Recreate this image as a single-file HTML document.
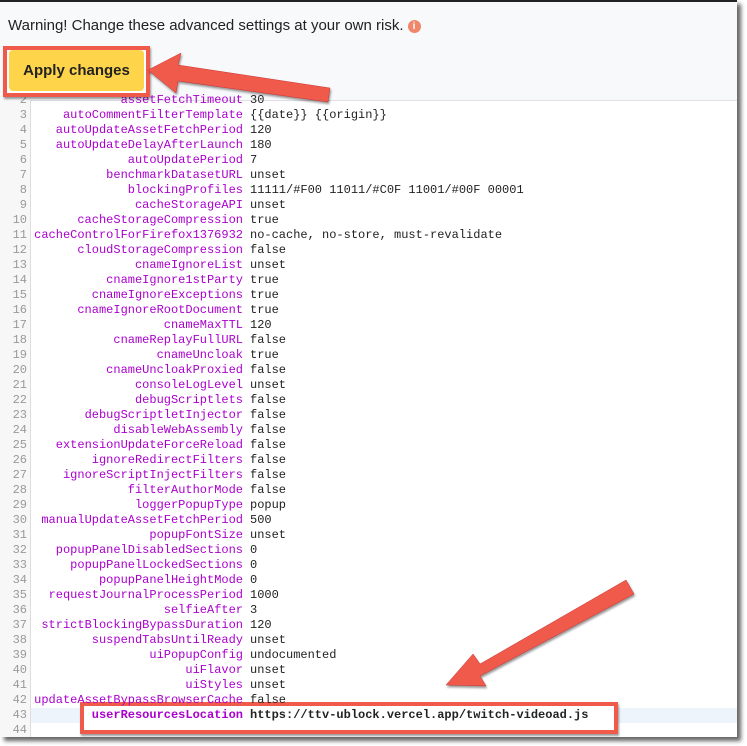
<!DOCTYPE html><html><head><style>
body{margin:0;width:747px;height:746px;background:#fff;position:relative;overflow:hidden;font-family:"Liberation Sans",sans-serif}
.frame{position:absolute;left:0;top:0;width:737px;height:735px;background:#fff;border-top:2px solid #222;box-shadow:4px 4px 4px rgba(0,0,0,.6);overflow:hidden}
.hdr{position:absolute;left:0;top:0;width:737px;height:98px;background:#f8f9fb;border-bottom:1px solid #e0e0e4}
.warn{position:absolute;left:8px;top:15px;font-size:15px;color:#222}
.info{display:inline-block;width:13px;height:13px;border-radius:50%;background:#f0866a;color:#fff;font-size:10px;font-weight:bold;text-align:center;line-height:13px;vertical-align:1px;margin-left:4px}
.btn{position:absolute;left:9px;top:48px;width:135px;height:41px;background:#fed54a;border-radius:4px;font-weight:bold;font-size:15px;color:#222;text-align:center;line-height:41px}
.rb{position:absolute;border:4px solid #ef5a4b;box-sizing:border-box;box-shadow:1px 2px 2px rgba(0,0,0,.4)}
.gut{position:absolute;left:0;top:98px;width:30px;height:640px;background:#f7f7f7;border-right:1px solid #ddd}
.ln{position:absolute;left:0;width:27px;text-align:right;font:12px "Liberation Mono",monospace;color:#999;height:15px;line-height:15px}
.k{position:absolute;right:494px;font:12px "Liberation Mono",monospace;color:#a0c;height:15px;line-height:15px;white-space:pre}
.v{position:absolute;left:250px;font:12px "Liberation Mono",monospace;color:#222;height:15px;line-height:15px;white-space:pre}
</style></head><body><div class="frame">
<div class="hdr"></div>
<div class="warn">Warning! Change these advanced settings at your own risk.<span class="info">i</span></div>
<div class="gut"></div>
<div style="position:absolute;left:31px;top:706px;width:710px;height:15px;background:#eef4fc"></div>
<div class="rb" style="left:80px;top:700px;width:538px;height:32px;background:#fff"></div>
<div id="c"></div>
<div class="rb" style="left:3px;top:44px;width:147px;height:51px;background:#fff"></div>
<div class="btn">Apply changes</div>
<svg style="position:absolute;left:0;top:0" width="747" height="746">
<g fill="#ef5a4b" stroke="#c33" stroke-width="0.5" style="filter:drop-shadow(1px 2px 1px rgba(0,0,0,.4))">
<polygon points="330,86 178,63 181,51 148,68 176,91 178,79 328,100"/>
<polygon points="626,578 480,662 473,652 446,683 486,684 480,674 634,592"/>
</g></svg>
</div>
<script>
var d=[[2,"assetFetchTimeout","30"],[3,"autoCommentFilterTemplate","{{date}} {{origin}}"],[4,"autoUpdateAssetFetchPeriod","120"],[5,"autoUpdateDelayAfterLaunch","180"],[6,"autoUpdatePeriod","7"],[7,"benchmarkDatasetURL","unset"],[8,"blockingProfiles","11111/#F00 11011/#C0F 11001/#00F 00001"],[9,"cacheStorageAPI","unset"],[10,"cacheStorageCompression","true"],[11,"cacheControlForFirefox1376932","no-cache, no-store, must-revalidate"],[12,"cloudStorageCompression","false"],[13,"cnameIgnoreList","unset"],[14,"cnameIgnore1stParty","true"],[15,"cnameIgnoreExceptions","true"],[16,"cnameIgnoreRootDocument","true"],[17,"cnameMaxTTL","120"],[18,"cnameReplayFullURL","false"],[19,"cnameUncloak","true"],[20,"cnameUncloakProxied","false"],[21,"consoleLogLevel","unset"],[22,"debugScriptlets","false"],[23,"debugScriptletInjector","false"],[24,"disableWebAssembly","false"],[25,"extensionUpdateForceReload","false"],[26,"ignoreRedirectFilters","false"],[27,"ignoreScriptInjectFilters","false"],[28,"filterAuthorMode","false"],[29,"loggerPopupType","popup"],[30,"manualUpdateAssetFetchPeriod","500"],[31,"popupFontSize","unset"],[32,"popupPanelDisabledSections","0"],[33,"popupPanelLockedSections","0"],[34,"popupPanelHeightMode","0"],[35,"requestJournalProcessPeriod","1000"],[36,"selfieAfter","3"],[37,"strictBlockingBypassDuration","120"],[38,"suspendTabsUntilReady","unset"],[39,"uiPopupConfig","undocumented"],[40,"uiFlavor","unset"],[41,"uiStyles","unset"],[42,"updateAssetBypassBrowserCache","false"],[43,"userResourcesLocation","https://ttv-ublock.vercel.app/twitch-videoad.js"],[44,"",""]];
var h="";d.forEach(function(r){var t=106+(r[0]-3)*15;var b=r[0]==43?"font-weight:bold;":"";h+='<div class="ln" style="top:'+t+'px">'+r[0]+'</div><div class="k" style="top:'+t+'px;'+b+'">'+r[1]+'</div><div class="v" style="top:'+t+'px;'+b+'">'+r[2]+'</div>';});
document.getElementById("c").innerHTML=h;
</script></body></html>
